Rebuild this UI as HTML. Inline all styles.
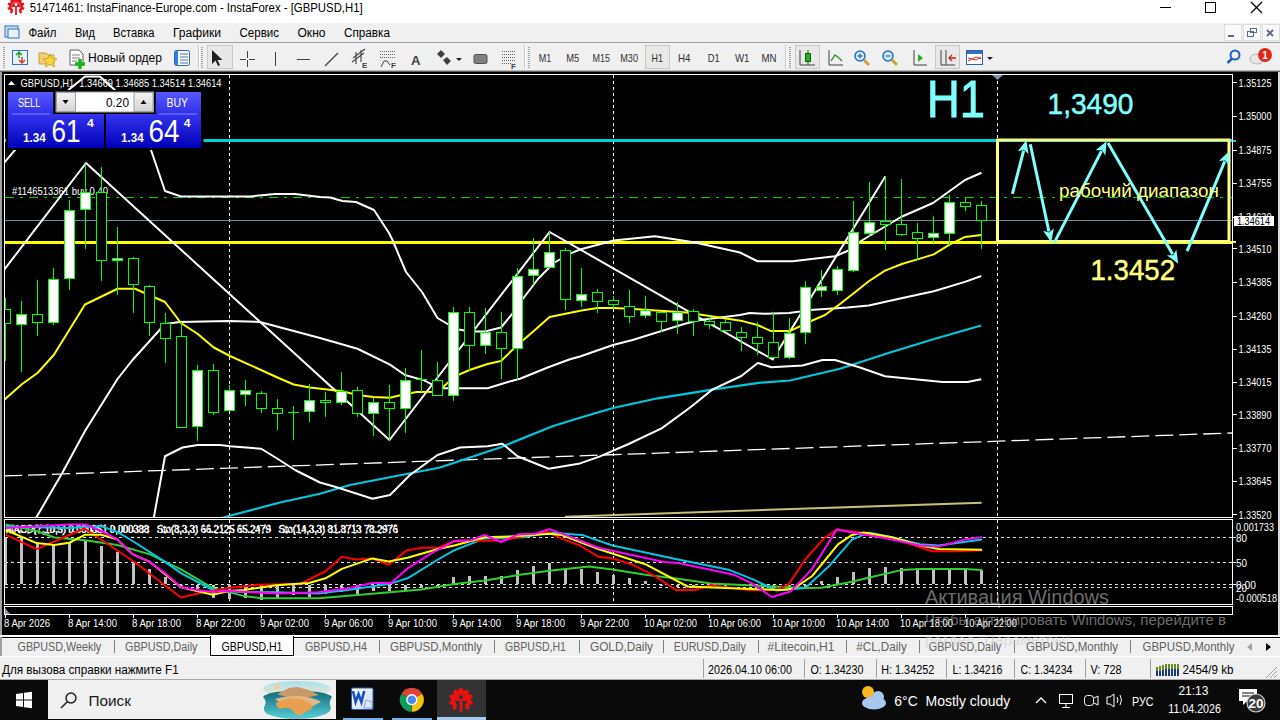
<!DOCTYPE html><html><head><meta charset="utf-8"><style>html,body{margin:0;padding:0;width:1280px;height:720px;overflow:hidden;background:#000}svg text{white-space:pre}</style></head><body>
<svg width="1280" height="720" viewBox="0 0 1280 720" style="position:absolute;left:0;top:0" font-family='"Liberation Sans", sans-serif'>
<rect x="0" y="0" width="1280" height="23" fill="#fff"/>
<rect x="0" y="23" width="1280" height="20" fill="#f0f0f0"/>
<rect x="0" y="42" width="1280" height="1" fill="#a0a0a0"/>
<rect x="0" y="43" width="1280" height="27" fill="#f0f0f0"/>
<g fill="#e8141e"><rect x="-1.17" y="-8.549999999999999" width="2.34" height="2.6999999999999997" transform="translate(16,6.5) rotate(-140)"/><rect x="-1.17" y="-8.549999999999999" width="2.34" height="2.6999999999999997" transform="translate(16,6.5) rotate(-105)"/><rect x="-1.17" y="-8.549999999999999" width="2.34" height="2.6999999999999997" transform="translate(16,6.5) rotate(-70)"/><rect x="-1.17" y="-8.549999999999999" width="2.34" height="2.6999999999999997" transform="translate(16,6.5) rotate(-35)"/><rect x="-1.17" y="-8.549999999999999" width="2.34" height="2.6999999999999997" transform="translate(16,6.5) rotate(0)"/><rect x="-1.17" y="-8.549999999999999" width="2.34" height="2.6999999999999997" transform="translate(16,6.5) rotate(35)"/><rect x="-1.17" y="-8.549999999999999" width="2.34" height="2.6999999999999997" transform="translate(16,6.5) rotate(70)"/><rect x="-1.17" y="-8.549999999999999" width="2.34" height="2.6999999999999997" transform="translate(16,6.5) rotate(105)"/><rect x="-1.17" y="-8.549999999999999" width="2.34" height="2.6999999999999997" transform="translate(16,6.5) rotate(140)"/><path d="M12.696199726617976,11.218315775104593 A5.76,5.76 0 1 1 19.303800273382024,11.218315775104593" fill="none" stroke="#e8141e" stroke-width="2.6999999999999997"/><path d="M11.32,6.95 A4.68,4.68 0 0 1 20.68,6.95 Z"/><rect x="15.1" y="6.5" width="1.8" height="8.549999999999999"/><circle cx="16" cy="4.52" r="1.44" fill="#fff"/></g>
<text x="29.7" y="12.2" font-size="12" fill="#000" text-anchor="start" font-weight="normal" textLength="333" lengthAdjust="spacingAndGlyphs" >51471461: InstaFinance-Europe.com - InstaForex - [GBPUSD,H1]</text>
<g stroke="#000" stroke-width="1" fill="none" shape-rendering="crispEdges"><line x1="1160" y1="7.5" x2="1171" y2="7.5"/><rect x="1205.5" y="2.5" width="10" height="10"/></g>
<g stroke="#000" stroke-width="1.2" fill="none"><line x1="1251" y1="2" x2="1262" y2="13"/><line x1="1262" y1="2" x2="1251" y2="13"/></g>
<g><rect x="5" y="26" width="13" height="11" fill="#cfe0f4" stroke="#3070c0" stroke-width="1"/><rect x="8" y="29" width="11" height="9" fill="#e8f0fa" stroke="#3070c0" stroke-width="1"/></g>
<text x="28.4" y="37" font-size="12" fill="#000" text-anchor="start" font-weight="normal" textLength="28" lengthAdjust="spacingAndGlyphs" >Файл</text>
<text x="75" y="37" font-size="12" fill="#000" text-anchor="start" font-weight="normal" textLength="20" lengthAdjust="spacingAndGlyphs" >Вид</text>
<text x="113" y="37" font-size="12" fill="#000" text-anchor="start" font-weight="normal" textLength="41.5" lengthAdjust="spacingAndGlyphs" >Вставка</text>
<text x="173" y="37" font-size="12" fill="#000" text-anchor="start" font-weight="normal" textLength="48" lengthAdjust="spacingAndGlyphs" >Графики</text>
<text x="239.5" y="37" font-size="12" fill="#000" text-anchor="start" font-weight="normal" textLength="39.5" lengthAdjust="spacingAndGlyphs" >Сервис</text>
<text x="297.5" y="37" font-size="12" fill="#000" text-anchor="start" font-weight="normal" textLength="28" lengthAdjust="spacingAndGlyphs" >Окно</text>
<text x="344" y="37" font-size="12" fill="#000" text-anchor="start" font-weight="normal" textLength="46" lengthAdjust="spacingAndGlyphs" >Справка</text>
<g shape-rendering="crispEdges">
<rect x="1224.0" y="24.5" width="17" height="16" fill="#fafafa" stroke="#dcdcdc"/>
<rect x="1243.0" y="24.5" width="17" height="16" fill="#fafafa" stroke="#dcdcdc"/>
<rect x="1262.0" y="24.5" width="17" height="16" fill="#fafafa" stroke="#dcdcdc"/>
<rect x="1228" y="35" width="6" height="2" fill="#5a6a80"/>
<rect x="1247.5" y="31.5" width="6" height="5" fill="none" stroke="#5a6a80"/><rect x="1250.5" y="28.5" width="6" height="4" fill="none" stroke="#5a6a80"/>
</g>
<g stroke="#5a6a80" stroke-width="1.8"><line x1="1267" y1="30" x2="1273" y2="36"/><line x1="1273" y1="30" x2="1267" y2="36"/></g>
<g shape-rendering="crispEdges">
<rect x="3" y="47" width="2" height="1" fill="#a0a0a0"/>
<rect x="3" y="49" width="2" height="1" fill="#a0a0a0"/>
<rect x="3" y="51" width="2" height="1" fill="#a0a0a0"/>
<rect x="3" y="53" width="2" height="1" fill="#a0a0a0"/>
<rect x="3" y="55" width="2" height="1" fill="#a0a0a0"/>
<rect x="3" y="57" width="2" height="1" fill="#a0a0a0"/>
<rect x="3" y="59" width="2" height="1" fill="#a0a0a0"/>
<rect x="3" y="61" width="2" height="1" fill="#a0a0a0"/>
<rect x="3" y="63" width="2" height="1" fill="#a0a0a0"/>
<rect x="3" y="65" width="2" height="1" fill="#a0a0a0"/>
<rect x="3" y="67" width="2" height="1" fill="#a0a0a0"/>
<rect x="201" y="47" width="2" height="1" fill="#a0a0a0"/>
<rect x="201" y="49" width="2" height="1" fill="#a0a0a0"/>
<rect x="201" y="51" width="2" height="1" fill="#a0a0a0"/>
<rect x="201" y="53" width="2" height="1" fill="#a0a0a0"/>
<rect x="201" y="55" width="2" height="1" fill="#a0a0a0"/>
<rect x="201" y="57" width="2" height="1" fill="#a0a0a0"/>
<rect x="201" y="59" width="2" height="1" fill="#a0a0a0"/>
<rect x="201" y="61" width="2" height="1" fill="#a0a0a0"/>
<rect x="201" y="63" width="2" height="1" fill="#a0a0a0"/>
<rect x="201" y="65" width="2" height="1" fill="#a0a0a0"/>
<rect x="201" y="67" width="2" height="1" fill="#a0a0a0"/>
<rect x="527.5" y="47" width="2" height="1" fill="#a0a0a0"/>
<rect x="527.5" y="49" width="2" height="1" fill="#a0a0a0"/>
<rect x="527.5" y="51" width="2" height="1" fill="#a0a0a0"/>
<rect x="527.5" y="53" width="2" height="1" fill="#a0a0a0"/>
<rect x="527.5" y="55" width="2" height="1" fill="#a0a0a0"/>
<rect x="527.5" y="57" width="2" height="1" fill="#a0a0a0"/>
<rect x="527.5" y="59" width="2" height="1" fill="#a0a0a0"/>
<rect x="527.5" y="61" width="2" height="1" fill="#a0a0a0"/>
<rect x="527.5" y="63" width="2" height="1" fill="#a0a0a0"/>
<rect x="527.5" y="65" width="2" height="1" fill="#a0a0a0"/>
<rect x="527.5" y="67" width="2" height="1" fill="#a0a0a0"/>
<rect x="789" y="47" width="2" height="1" fill="#a0a0a0"/>
<rect x="789" y="49" width="2" height="1" fill="#a0a0a0"/>
<rect x="789" y="51" width="2" height="1" fill="#a0a0a0"/>
<rect x="789" y="53" width="2" height="1" fill="#a0a0a0"/>
<rect x="789" y="55" width="2" height="1" fill="#a0a0a0"/>
<rect x="789" y="57" width="2" height="1" fill="#a0a0a0"/>
<rect x="789" y="59" width="2" height="1" fill="#a0a0a0"/>
<rect x="789" y="61" width="2" height="1" fill="#a0a0a0"/>
<rect x="789" y="63" width="2" height="1" fill="#a0a0a0"/>
<rect x="789" y="65" width="2" height="1" fill="#a0a0a0"/>
<rect x="789" y="67" width="2" height="1" fill="#a0a0a0"/>
<rect x="197.5" y="45" width="1" height="24" fill="#c8c8c8"/><rect x="198.5" y="45" width="1" height="24" fill="#ffffff"/>
<rect x="523.5" y="45" width="1" height="24" fill="#c8c8c8"/><rect x="524.5" y="45" width="1" height="24" fill="#ffffff"/>
<rect x="785" y="45" width="1" height="24" fill="#c8c8c8"/><rect x="786" y="45" width="1" height="24" fill="#ffffff"/>
<rect x="207.5" y="45.5" width="24.5" height="23" fill="#e8e8e8" stroke="#c8c8c8"/>
<rect x="645.5" y="45.5" width="24.0" height="23" fill="#e8e8e8" stroke="#c8c8c8"/>
<rect x="795.5" y="45.5" width="23.5" height="23" fill="#e8e8e8" stroke="#c8c8c8"/>
<rect x="935" y="45.5" width="24" height="23" fill="#e8e8e8" stroke="#c8c8c8"/>
</g>
<rect x="12.5" y="50.5" width="15" height="14" fill="#e8f0fa" stroke="#3070c0"/><path d="M16 55 l3-3 l3 3 M19 53 v5" stroke="#20a020" stroke-width="1.5" fill="none"/><path d="M19 60 l3 3 l3-3 M22 62 v-5" stroke="#e04020" stroke-width="1.5" fill="none"/>
<path d="M39 53 h7 l2 2 h6 v9 h-15 z" fill="#f0d070" stroke="#c0a040"/><path d="M50 54 l2 4.5 5 .5 -3.7 3 1.2 5 -4.5-2.7 -4.5 2.7 1.2-5 -3.7-3 5-.5z" fill="#f8d838" stroke="#c09020" stroke-width=".8"/>
<path d="M70 50 h9 l4 4 v11 h-13 z" fill="#fff" stroke="#606060"/><path d="M72 55 h8 M72 58 h8 M72 61 h5" stroke="#808080"/><path d="M80 59 v10 M75 64 h10" stroke="#20b020" stroke-width="3.5"/>
<text x="88" y="61.5" font-size="12" fill="#000" text-anchor="start" font-weight="normal" textLength="74" lengthAdjust="spacingAndGlyphs" >Новый ордер</text>
<rect x="174.5" y="50.5" width="15" height="15" rx="2" fill="#fff" stroke="#3060b0"/><rect x="175" y="51" width="3" height="14" fill="#3080e0"/><path d="M180 54 h8 M180 57 h8 M180 60 h8 M180 63 h8" stroke="#4070b0"/>
<path d="M212 50 v14 l3.5-3.5 l2.5 5.5 l2-1 l-2.5-5 h5 z" fill="#202020"/>
<path d="M247.5 51 v7 M247.5 60 v7 M240 59.5 h6 M249 59.5 h6" stroke="#404040"/>
<path d="M275.5 52 v14" stroke="#404040"/>
<path d="M297 59.5 h13" stroke="#404040"/>
<path d="M325 66 l13-13" stroke="#404040" stroke-width="1.2"/>
<path d="M352 62 l12-9 M353 58 l12-9 M356 52 v12 M361 50 v12" stroke="#404040" stroke-width="1.1"/>
<text x="362" y="68" font-size="8" fill="#404040" text-anchor="start" font-weight="bold" >E</text>
<path d="M380 51.5 h15 M380 54.5 h15 M380 57.5 h15" stroke="#606060" stroke-dasharray="1 1"/><path d="M381 67 l3-6 h3 l3 4" stroke="#404040" fill="none"/>
<text x="391" y="68" font-size="8" fill="#404040" text-anchor="start" font-weight="bold" >F</text>
<text x="411" y="65" font-size="13" fill="#404040" text-anchor="start" font-weight="bold" textLength="9.5" lengthAdjust="spacingAndGlyphs" >A</text>
<path d="M437 54 l4-4 l4 4 l-4 4z M443 60 l4-3 l4 4 l-4 4z" fill="#404040"/><path d="M456 58 h6 l-3 3z" fill="#202020"/>
<rect x="474" y="54.5" width="13" height="9" rx="1.5" fill="#808080" stroke="#505050"/>
<path d="M502 51.5 h14 M502 54.5 h14 M502 57.5 h14 M502 60.5 h14 M502 63.5 h10" stroke="#606060" stroke-dasharray="1 1"/>
<text x="511" y="69" font-size="8" fill="#404040" text-anchor="start" font-weight="bold" >F</text>
<text x="538.75" y="62" font-size="11" fill="#303030" text-anchor="start" font-weight="normal" textLength="12.5" lengthAdjust="spacingAndGlyphs" >M1</text>
<text x="566.25" y="62" font-size="11" fill="#303030" text-anchor="start" font-weight="normal" textLength="13" lengthAdjust="spacingAndGlyphs" >M5</text>
<text x="592.5" y="62" font-size="11" fill="#303030" text-anchor="start" font-weight="normal" textLength="17.5" lengthAdjust="spacingAndGlyphs" >M15</text>
<text x="620.3" y="62" font-size="11" fill="#303030" text-anchor="start" font-weight="normal" textLength="17.7" lengthAdjust="spacingAndGlyphs" >M30</text>
<text x="651.5" y="62" font-size="11" fill="#303030" text-anchor="start" font-weight="normal" textLength="11.5" lengthAdjust="spacingAndGlyphs" >H1</text>
<text x="678" y="62" font-size="11" fill="#303030" text-anchor="start" font-weight="normal" textLength="12.5" lengthAdjust="spacingAndGlyphs" >H4</text>
<text x="707.8" y="62" font-size="11" fill="#303030" text-anchor="start" font-weight="normal" textLength="12" lengthAdjust="spacingAndGlyphs" >D1</text>
<text x="735" y="62" font-size="11" fill="#303030" text-anchor="start" font-weight="normal" textLength="14.5" lengthAdjust="spacingAndGlyphs" >W1</text>
<text x="761.5" y="62" font-size="11" fill="#303030" text-anchor="start" font-weight="normal" textLength="15" lengthAdjust="spacingAndGlyphs" >MN</text>
<path d="M800 50 v15 h15" stroke="#404040" fill="none"/><rect x="805.5" y="53.5" width="5" height="8" fill="#20b020" stroke="#106010"/><path d="M808 50 v3 M808 62 v3" stroke="#106010"/>
<path d="M829 50 v15 h14" stroke="#404040" fill="none"/><path d="M831 61 l4-6 l4 3 l3 3" stroke="#209020" fill="none" stroke-width="1.3"/>
<circle cx="860" cy="56" r="5" fill="#d8ecff" stroke="#2070c0" stroke-width="1.5"/><path d="M857.5 56 h5 M860 53.5 v5" stroke="#2070c0" stroke-width="1.3"/><path d="M864 60 l5 5" stroke="#d0a030" stroke-width="3"/>
<circle cx="888" cy="56" r="5" fill="#d8ecff" stroke="#2070c0" stroke-width="1.5"/><path d="M885.5 56 h5" stroke="#2070c0" stroke-width="1.3"/><path d="M892 60 l5 5" stroke="#d0a030" stroke-width="3"/>
<path d="M914 50 v15 h13" stroke="#404040" fill="none"/><path d="M918 54 l5 4 l-5 4z" fill="#20b020"/>
<path d="M941 50 v15 h14 M946 50 v15" stroke="#404040" fill="none"/><path d="M956 58 h-6 M952 55 l-3 3 l3 3" stroke="#d02020" fill="none" stroke-width="1.3"/>
<rect x="966.5" y="50.5" width="16" height="14" fill="#fff" stroke="#3060a0"/><rect x="967" y="51" width="15" height="3" fill="#3070c0"/><path d="M968 61 l4-2 l4 1 l5-3 M968 58 l4 1 l4-2 l5 2" stroke="#d03030" fill="none"/><path d="M987 57 h6 l-3 3z" fill="#202020"/>
<circle cx="1235" cy="55" r="4.5" fill="none" stroke="#2060c0" stroke-width="2"/><path d="M1232 58.5 l-4.5 4.5" stroke="#2060c0" stroke-width="2.5"/>
<ellipse cx="1257" cy="59" rx="7" ry="5" fill="#e8e8e8" stroke="#b0b0b0"/><circle cx="1265" cy="55" r="7" fill="#e02818"/>
<text x="1265" y="59" font-size="10" fill="#fff" text-anchor="middle" font-weight="bold" >1</text>
<rect x="2" y="72" width="1276" height="563" fill="#000"/>
<rect x="0" y="70" width="1280" height="1" fill="#b8b8b8"/><rect x="0" y="71" width="1280" height="1" fill="#606060"/>
<rect x="0" y="72" width="2" height="565" fill="#a0a0a0"/>
<rect x="1278" y="72" width="2" height="565" fill="#d8d8d8"/>
<g shape-rendering="crispEdges">
<rect x="4.5" y="74.5" width="1228" height="443" fill="none" stroke="#fff" stroke-width="1"/>
<rect x="4.5" y="519.5" width="1228" height="85" fill="none" stroke="#fff" stroke-width="1"/>
<rect x="4.5" y="606.5" width="1228" height="8" fill="none" stroke="#fff" stroke-width="1"/>
</g>
<defs><clipPath id="cm"><rect x="5" y="75" width="1227" height="442"/></clipPath><clipPath id="ci"><rect x="5" y="520" width="1227" height="84"/></clipPath></defs>
<g clip-path="url(#cm)">
<g shape-rendering="crispEdges" stroke="#fff" stroke-width="1" stroke-dasharray="3 3">
<line x1="229.5" y1="75" x2="229.5" y2="517"/>
<line x1="613.5" y1="75" x2="613.5" y2="517"/>
<line x1="997.5" y1="75" x2="997.5" y2="517"/>
</g>
<g shape-rendering="crispEdges">
<rect x="5" y="139" width="1227" height="3" fill="#00d0d8"/>
<line x1="5" y1="197.5" x2="1232" y2="197.5" stroke="#00d000" stroke-width="1" stroke-dasharray="9 6 3 6"/>
<line x1="5" y1="220.5" x2="1232" y2="220.5" stroke="#778899" stroke-width="1"/>
<rect x="5" y="241" width="1227" height="3" fill="#ffff00"/>
</g>
<text x="20.5" y="87" font-size="10.5" fill="#fff" text-anchor="start" font-weight="normal" textLength="201" lengthAdjust="spacingAndGlyphs" >GBPUSD,H1  1.34669 1.34685 1.34514 1.34614</text>
<polygon points="8,85 11.5,81 15,85" fill="#fff"/>
<text x="12" y="194.5" font-size="10" fill="#fff" text-anchor="start" font-weight="normal" textLength="96" lengthAdjust="spacingAndGlyphs" >#1146513361 buy 0.40</text>
<line x1="4" y1="476" x2="1232" y2="433" stroke="#fff" stroke-width="1.3" stroke-dasharray="18 6"/>
<polyline points="565,516.7 981.7,502.7" fill="none" stroke="#c8c078" stroke-width="2" stroke-linejoin="round" />
<polyline points="221.25,518 280,502.5 320,493.75 350,485 440,467.5 500,447.5 552.5,426.25 580,417.7 613,408 657.7,398.3 712.2,389.6 758.8,382.8 790,380.5 840,368.75 890,352.5 935,338.75 981.25,325.5" fill="none" stroke="#00c8dc" stroke-width="2.2" stroke-linejoin="round" />
<polyline points="153.75,518 165,456.25 182.5,447.5 197.5,445 220,445 230,446.25 261.25,448.75 277.5,458.75 295,470 320,482.5 337.5,487.5 372.5,498.75 390,495 410,475 437.5,455 460,447.5 487.5,446.25 502.5,443.75 517.5,456.25 548.75,468.75 580,463.4 599.4,456.6 628.6,444 661.6,428.4 690.8,407 712.2,389.6 741.3,376 757.8,363 771.4,367.2 802.5,365.5 822.5,360 835,360 860,367.5 885,376.25 910,378.75 942.5,382 967.5,382 981.25,379.25" fill="none" stroke="#fff" stroke-width="2" stroke-linejoin="round" />
<polyline points="36,518 62.5,472.5 85,431 117.5,379 132.5,360 165,324 180,322 229,321 260,322 320,338 357.5,348.75 390,364.6 405,375 424,380.4 440,388.3 487.6,388.3 508.7,381.7 520,378.75 548.3,367.2 570,359.3 580,356.5 613,345 632.5,340 685,323.75 700,320 740,315 749.5,313 765,313.75 789,313 800,311.6 810,310 847.5,307.5 868.75,305.6 902.5,298.1 933.75,291.25 965,281.9 981.25,276" fill="none" stroke="#fff" stroke-width="2" stroke-linejoin="round" />
<polyline points="4,163 15,150 69,89.6 85,76.5 100,76.5 114.8,90 151,150 165,191 181,196.5 230,196.5 250,196.5 275,194 295,194 320,197 330,197.5 342.5,201 356,202 374,210 389,233 392.5,240 406,272 422,292 437.5,318 456,329 470,331.5 485,331.5 501,327.5 517.5,307.5 522,300 538,279 553.6,263 570,253.7 580,249.5 613.75,240.5 655,236.25 695,242.5 740,252.5 757.5,261.25 792.5,261.25 835,256.25 847.5,251 856,244 901,217 933,203 965,180 981.5,172.75" fill="none" stroke="#fff" stroke-width="2" stroke-linejoin="round" />
<polyline points="4,270 86,163 389.5,440 549.6,232 772.7,359.5 885.3,176.5" fill="none" stroke="#fff" stroke-width="2" stroke-linejoin="round" />
<polyline points="4,400 22.5,383.75 37.5,373 53.75,355 85,304.5 117.5,288.75 135,288.75 165,302 181,323 197.5,333.75 213.75,347.5 230,356 261,370 277.5,377.5 293.75,384.5 310,387.5 342.5,391.25 357.5,395 373.5,397 390,397.8 405.5,394 416.7,392 437.8,391.7 442,388 454.4,376.7 469.5,370 487.6,364 501,361 517.5,345 533.5,331.25 549.6,317 565.5,313.75 581.5,310.5 597.5,308 613.5,308 630,308.8 652.5,310.2 686.25,312.6 714.4,316.8 742.5,321.1 757.5,325 770.6,330.9 790.3,330.9 810,321.5 825,315 840,304 856.25,291.25 868.75,281.25 885,270.6 902.5,263.75 917.5,259.4 933.75,254.4 950,244.4 965,236.9 981.25,235" fill="none" stroke="#ffff00" stroke-width="2" stroke-linejoin="round" />
<g shape-rendering="crispEdges" stroke="#00ff00" stroke-width="1">
<line x1="5.5" y1="298" x2="5.5" y2="361"/>
<rect x="0.5" y="309.5" width="10" height="14" fill="#000000"/>
<line x1="21.5" y1="301" x2="21.5" y2="372"/>
<rect x="16.5" y="314.5" width="10" height="10" fill="#ffffff"/>
<line x1="37.5" y1="280" x2="37.5" y2="336"/>
<rect x="32.5" y="314.5" width="10" height="8" fill="#000000"/>
<line x1="53.5" y1="268" x2="53.5" y2="325"/>
<rect x="48.5" y="279.5" width="10" height="43" fill="#ffffff"/>
<line x1="69.5" y1="200" x2="69.5" y2="290"/>
<rect x="64.5" y="210.5" width="10" height="68" fill="#ffffff"/>
<line x1="85.5" y1="164" x2="85.5" y2="249"/>
<rect x="80.5" y="192.5" width="10" height="17" fill="#ffffff"/>
<line x1="101.5" y1="167" x2="101.5" y2="281"/>
<rect x="96.5" y="192.5" width="10" height="68" fill="#000000"/>
<line x1="117.5" y1="227" x2="117.5" y2="295"/>
<rect x="112.5" y="258.5" width="10" height="2" fill="#ffffff"/>
<line x1="133.5" y1="257" x2="133.5" y2="313"/>
<rect x="128.5" y="258.5" width="10" height="26" fill="#000000"/>
<line x1="149.5" y1="285" x2="149.5" y2="336"/>
<rect x="144.5" y="286.5" width="10" height="36" fill="#000000"/>
<line x1="165.5" y1="313" x2="165.5" y2="363"/>
<rect x="160.5" y="323.5" width="10" height="15" fill="#000000"/>
<line x1="181.5" y1="322" x2="181.5" y2="428"/>
<rect x="176.5" y="336.5" width="10" height="91" fill="#000000"/>
<line x1="197.5" y1="365" x2="197.5" y2="441"/>
<rect x="192.5" y="370.5" width="10" height="56" fill="#ffffff"/>
<line x1="213.5" y1="364" x2="213.5" y2="415"/>
<rect x="208.5" y="370.5" width="10" height="42" fill="#000000"/>
<line x1="229.5" y1="385" x2="229.5" y2="411"/>
<rect x="224.5" y="390.5" width="10" height="20" fill="#ffffff"/>
<line x1="245.5" y1="380" x2="245.5" y2="406"/>
<rect x="240.5" y="390.5" width="10" height="4" fill="#ffffff"/>
<line x1="261.5" y1="391" x2="261.5" y2="413"/>
<rect x="256.5" y="393.5" width="10" height="15" fill="#000000"/>
<line x1="277.5" y1="399" x2="277.5" y2="430"/>
<rect x="272.5" y="408.5" width="10" height="5" fill="#000000"/>
<line x1="293.5" y1="406" x2="293.5" y2="440"/>
<line x1="288" y1="412.5" x2="299" y2="412.5"/>
<line x1="309.5" y1="384" x2="309.5" y2="422"/>
<rect x="304.5" y="400.5" width="10" height="11" fill="#ffffff"/>
<line x1="325.5" y1="392" x2="325.5" y2="417"/>
<rect x="320.5" y="400.5" width="10" height="2" fill="#000000"/>
<line x1="341.5" y1="372" x2="341.5" y2="405"/>
<rect x="336.5" y="391.5" width="10" height="11" fill="#ffffff"/>
<line x1="357.5" y1="387" x2="357.5" y2="417"/>
<rect x="352.5" y="390.5" width="10" height="23" fill="#000000"/>
<line x1="373.5" y1="398" x2="373.5" y2="436"/>
<rect x="368.5" y="402.5" width="10" height="11" fill="#ffffff"/>
<line x1="389.5" y1="385" x2="389.5" y2="441"/>
<rect x="384.5" y="402.5" width="10" height="6" fill="#000000"/>
<line x1="405.5" y1="368" x2="405.5" y2="433"/>
<rect x="400.5" y="380.5" width="10" height="28" fill="#ffffff"/>
<line x1="421.5" y1="350" x2="421.5" y2="392"/>
<line x1="416" y1="379.5" x2="427" y2="379.5"/>
<line x1="437.5" y1="362" x2="437.5" y2="396"/>
<rect x="432.5" y="380.5" width="10" height="15" fill="#000000"/>
<line x1="453.5" y1="307" x2="453.5" y2="401"/>
<rect x="448.5" y="312.5" width="10" height="83" fill="#ffffff"/>
<line x1="469.5" y1="307" x2="469.5" y2="371"/>
<rect x="464.5" y="312.5" width="10" height="33" fill="#000000"/>
<line x1="485.5" y1="308" x2="485.5" y2="354"/>
<rect x="480.5" y="332.5" width="10" height="13" fill="#ffffff"/>
<line x1="501.5" y1="312" x2="501.5" y2="379"/>
<rect x="496.5" y="332.5" width="10" height="16" fill="#000000"/>
<line x1="517.5" y1="268" x2="517.5" y2="380"/>
<rect x="512.5" y="276.5" width="10" height="72" fill="#ffffff"/>
<line x1="533.5" y1="238" x2="533.5" y2="285"/>
<rect x="528.5" y="269.5" width="10" height="6" fill="#ffffff"/>
<line x1="549.5" y1="232" x2="549.5" y2="268"/>
<rect x="544.5" y="252.5" width="10" height="15" fill="#ffffff"/>
<line x1="565.5" y1="248" x2="565.5" y2="310"/>
<rect x="560.5" y="250.5" width="10" height="49" fill="#000000"/>
<line x1="581.5" y1="268" x2="581.5" y2="307"/>
<rect x="576.5" y="294.5" width="10" height="6" fill="#ffffff"/>
<line x1="597.5" y1="289" x2="597.5" y2="313"/>
<rect x="592.5" y="292.5" width="10" height="9" fill="#000000"/>
<line x1="613.5" y1="296" x2="613.5" y2="309"/>
<rect x="608.5" y="300.5" width="10" height="4" fill="#000000"/>
<line x1="629.5" y1="290" x2="629.5" y2="323"/>
<rect x="624.5" y="306.5" width="10" height="10" fill="#000000"/>
<line x1="645.5" y1="296" x2="645.5" y2="318"/>
<rect x="640.5" y="310.5" width="10" height="5" fill="#ffffff"/>
<line x1="661.5" y1="312" x2="661.5" y2="332"/>
<rect x="656.5" y="312.5" width="10" height="9" fill="#000000"/>
<line x1="677.5" y1="302" x2="677.5" y2="334"/>
<rect x="672.5" y="312.5" width="10" height="8" fill="#ffffff"/>
<line x1="693.5" y1="309" x2="693.5" y2="336"/>
<rect x="688.5" y="311.5" width="10" height="10" fill="#000000"/>
<line x1="709.5" y1="316" x2="709.5" y2="329"/>
<rect x="704.5" y="321.5" width="10" height="3" fill="#000000"/>
<line x1="725.5" y1="319" x2="725.5" y2="332"/>
<rect x="720.5" y="322.5" width="10" height="8" fill="#000000"/>
<line x1="741.5" y1="327" x2="741.5" y2="351"/>
<rect x="736.5" y="332.5" width="10" height="5" fill="#000000"/>
<line x1="757.5" y1="322" x2="757.5" y2="355"/>
<rect x="752.5" y="337.5" width="10" height="6" fill="#000000"/>
<line x1="773.5" y1="312" x2="773.5" y2="358"/>
<rect x="768.5" y="342.5" width="10" height="15" fill="#000000"/>
<line x1="789.5" y1="318" x2="789.5" y2="359"/>
<rect x="784.5" y="333.5" width="10" height="24" fill="#ffffff"/>
<line x1="805.5" y1="281" x2="805.5" y2="344"/>
<rect x="800.5" y="287.5" width="10" height="45" fill="#ffffff"/>
<line x1="821.5" y1="270" x2="821.5" y2="297"/>
<rect x="816.5" y="286.5" width="10" height="4" fill="#ffffff"/>
<line x1="837.5" y1="266" x2="837.5" y2="295"/>
<rect x="832.5" y="269.5" width="10" height="21" fill="#ffffff"/>
<line x1="853.5" y1="201" x2="853.5" y2="272"/>
<rect x="848.5" y="232.5" width="10" height="38" fill="#ffffff"/>
<line x1="869.5" y1="182" x2="869.5" y2="237"/>
<rect x="864.5" y="222.5" width="10" height="11" fill="#ffffff"/>
<line x1="885.5" y1="176" x2="885.5" y2="250"/>
<rect x="880.5" y="221.5" width="10" height="3" fill="#000000"/>
<line x1="901.5" y1="179" x2="901.5" y2="236"/>
<rect x="896.5" y="224.5" width="10" height="10" fill="#000000"/>
<line x1="917.5" y1="223" x2="917.5" y2="260"/>
<rect x="912.5" y="232.5" width="10" height="6" fill="#000000"/>
<line x1="933.5" y1="216" x2="933.5" y2="243"/>
<rect x="928.5" y="233.5" width="10" height="4" fill="#ffffff"/>
<line x1="949.5" y1="195" x2="949.5" y2="245"/>
<rect x="944.5" y="202.5" width="10" height="31" fill="#ffffff"/>
<line x1="965.5" y1="197" x2="965.5" y2="211"/>
<rect x="960.5" y="202.5" width="10" height="4" fill="#000000"/>
<line x1="981.5" y1="201" x2="981.5" y2="249"/>
<rect x="976.5" y="205.5" width="10" height="15" fill="#000000"/>
</g>
<rect x="997.5" y="140" width="231.5" height="101.5" fill="none" stroke="#ffff80" stroke-width="3"/>
<line x1="1012.4" y1="193.9" x2="1023.6298035863915" y2="150.7454690751526" stroke="#80ffff" stroke-width="3"/>
<polygon points="1026.4,140.1 1028.4488660487664,154.0661071138028 1023.8816396239923,149.77769915922963 1017.8033969736138,151.29591070019427" fill="#80ffff"/>
<line x1="1030.3" y1="144.3" x2="1048.9056767998431" y2="231.54192949208726" stroke="#80ffff" stroke-width="3"/>
<polygon points="1051.2,242.3 1043.109491873131,230.7330782725452 1049.114251636221,232.51993590189753 1053.8675623810436,228.43875507238832" fill="#80ffff"/>
<line x1="1054.2" y1="242.9" x2="1101.4654745995701" y2="151.08026349299578" stroke="#80ffff" stroke-width="3"/>
<polygon points="1106.5,141.3 1105.4402380914444,155.37575591920998 1101.9231587268819,150.19114862999618 1095.6599745984486,150.34123051878007" fill="#80ffff"/>
<line x1="1108" y1="143.1" x2="1172.6696688631075" y2="254.29129674896114" stroke="#80ffff" stroke-width="3"/>
<polygon points="1178.2,263.8 1166.9098024854259,255.3276071808549 1173.1724262391886,255.1557243172374 1176.4185057364646,249.79727604396237" fill="#80ffff"/>
<line x1="1187.1" y1="251.2" x2="1224.7490683379735" y2="161.34542162774818" stroke="#80ffff" stroke-width="3"/>
<polygon points="1229,151.2 1229.0488824860245,165.31550957289747 1225.135516670885,160.42311057068017 1218.9034608582765,161.06457791087095" fill="#80ffff"/>
</g>
<text x="927" y="117.3" font-size="51" fill="#80ffff" text-anchor="start" font-weight="normal" textLength="58" lengthAdjust="spacingAndGlyphs" stroke="#80ffff" stroke-width="0.9">H1</text>
<text x="1047.5" y="114" font-size="30" fill="#80ffff" text-anchor="start" font-weight="normal" textLength="86" lengthAdjust="spacingAndGlyphs" stroke="#80ffff" stroke-width="0.5">1,3490</text>
<text x="1059" y="197" font-size="18.5" fill="#ffff80" text-anchor="start" font-weight="normal" textLength="160" lengthAdjust="spacingAndGlyphs" >рабочий диапазон</text>
<text x="1090.5" y="279.6" font-size="30" fill="#ffff80" text-anchor="start" font-weight="normal" textLength="84.5" lengthAdjust="spacingAndGlyphs" stroke="#ffff80" stroke-width="0.5">1.3452</text>
<polygon points="992,75 1003,75 997.5,80" fill="#8090a8"/>
<g shape-rendering="crispEdges" stroke="#fff" stroke-width="1">
<line x1="1233" y1="82.5" x2="1237" y2="82.5"/>
<line x1="1233" y1="116.5" x2="1237" y2="116.5"/>
<line x1="1233" y1="150.5" x2="1237" y2="150.5"/>
<line x1="1233" y1="183.5" x2="1237" y2="183.5"/>
<line x1="1233" y1="217.5" x2="1237" y2="217.5"/>
<line x1="1233" y1="248.5" x2="1237" y2="248.5"/>
<line x1="1233" y1="282.5" x2="1237" y2="282.5"/>
<line x1="1233" y1="316.5" x2="1237" y2="316.5"/>
<line x1="1233" y1="349.5" x2="1237" y2="349.5"/>
<line x1="1233" y1="382.5" x2="1237" y2="382.5"/>
<line x1="1233" y1="414.5" x2="1237" y2="414.5"/>
<line x1="1233" y1="448.5" x2="1237" y2="448.5"/>
<line x1="1233" y1="481.5" x2="1237" y2="481.5"/>
<line x1="1233" y1="514.5" x2="1237" y2="514.5"/>
</g>
<text x="1238.5" y="86.5" font-size="11" fill="#fff" text-anchor="start" font-weight="normal" textLength="33" lengthAdjust="spacingAndGlyphs" >1.35125</text>
<text x="1238.5" y="120" font-size="11" fill="#fff" text-anchor="start" font-weight="normal" textLength="33" lengthAdjust="spacingAndGlyphs" >1.35000</text>
<text x="1238.5" y="153.5" font-size="11" fill="#fff" text-anchor="start" font-weight="normal" textLength="33" lengthAdjust="spacingAndGlyphs" >1.34875</text>
<text x="1238.5" y="187" font-size="11" fill="#fff" text-anchor="start" font-weight="normal" textLength="33" lengthAdjust="spacingAndGlyphs" >1.34755</text>
<text x="1238.5" y="252.5" font-size="11" fill="#fff" text-anchor="start" font-weight="normal" textLength="33" lengthAdjust="spacingAndGlyphs" >1.34510</text>
<text x="1238.5" y="286" font-size="11" fill="#fff" text-anchor="start" font-weight="normal" textLength="33" lengthAdjust="spacingAndGlyphs" >1.34385</text>
<text x="1238.5" y="319.5" font-size="11" fill="#fff" text-anchor="start" font-weight="normal" textLength="33" lengthAdjust="spacingAndGlyphs" >1.34260</text>
<text x="1238.5" y="353" font-size="11" fill="#fff" text-anchor="start" font-weight="normal" textLength="33" lengthAdjust="spacingAndGlyphs" >1.34135</text>
<text x="1238.5" y="385.5" font-size="11" fill="#fff" text-anchor="start" font-weight="normal" textLength="33" lengthAdjust="spacingAndGlyphs" >1.34015</text>
<text x="1238.5" y="418.5" font-size="11" fill="#fff" text-anchor="start" font-weight="normal" textLength="33" lengthAdjust="spacingAndGlyphs" >1.33890</text>
<text x="1238.5" y="451.5" font-size="11" fill="#fff" text-anchor="start" font-weight="normal" textLength="33" lengthAdjust="spacingAndGlyphs" >1.33770</text>
<text x="1238.5" y="485" font-size="11" fill="#fff" text-anchor="start" font-weight="normal" textLength="33" lengthAdjust="spacingAndGlyphs" >1.33645</text>
<text x="1238.5" y="518.5" font-size="11" fill="#fff" text-anchor="start" font-weight="normal" textLength="33" lengthAdjust="spacingAndGlyphs" >1.33520</text>
<text x="1238.5" y="221" font-size="11" fill="#fff" text-anchor="start" font-weight="normal" textLength="33" lengthAdjust="spacingAndGlyphs" >1.34630</text>
<rect x="1234" y="216" width="40" height="10" fill="#fff"/>
<text x="1237" y="225" font-size="11" fill="#000" text-anchor="start" font-weight="normal" textLength="33" lengthAdjust="spacingAndGlyphs" >1.34614</text>
<rect x="1233" y="140" width="3" height="2" fill="#00d0d8"/><rect x="1233" y="241" width="3" height="2" fill="#ffff00"/>
<g clip-path="url(#ci)">
<g shape-rendering="crispEdges" stroke="#fff" stroke-width="1" stroke-dasharray="3 3">
<text x="6" y="532.5" font-size="10" fill="#fff" text-anchor="start" font-weight="normal" textLength="392" lengthAdjust="spacingAndGlyphs" >MACD(7,10,5) 0.000351 0,000388   Sto(8,3,3) 66.2125 65.2479   Sto(14,3,3) 81.8713 78.2976</text>
<line x1="5" y1="537.5" x2="1232" y2="537.5" stroke="#e0e0e0"/>
<line x1="5" y1="562.5" x2="1232" y2="562.5" stroke="#e0e0e0"/>
<line x1="5" y1="584.5" x2="1232" y2="584.5" stroke="#e0e0e0"/>
<line x1="5" y1="587.5" x2="1232" y2="587.5" stroke="#e0e0e0"/>
<line x1="229.5" y1="520" x2="229.5" y2="604"/>
<line x1="613.5" y1="520" x2="613.5" y2="604"/>
<line x1="997.5" y1="520" x2="997.5" y2="604"/>
</g>
<g shape-rendering="crispEdges" fill="#c0c0c0">
<rect x="4" y="537" width="3" height="47"/>
<rect x="20" y="537" width="3" height="47"/>
<rect x="36" y="543" width="3" height="41"/>
<rect x="52" y="545" width="3" height="39"/>
<rect x="68" y="542" width="3" height="42"/>
<rect x="84" y="540" width="3" height="44"/>
<rect x="100" y="546" width="3" height="38"/>
<rect x="116" y="552" width="3" height="32"/>
<rect x="132" y="563" width="3" height="21"/>
<rect x="148" y="569" width="3" height="15"/>
<rect x="164" y="577" width="3" height="7"/>
<rect x="180" y="585" width="3" height="1"/>
<rect x="196" y="585" width="3" height="4"/>
<rect x="212" y="585" width="3" height="13"/>
<rect x="228" y="585" width="3" height="14"/>
<rect x="244" y="585" width="3" height="13"/>
<rect x="260" y="585" width="3" height="15"/>
<rect x="276" y="585" width="3" height="14"/>
<rect x="292" y="585" width="3" height="10"/>
<rect x="308" y="585" width="3" height="12"/>
<rect x="324" y="585" width="3" height="9"/>
<rect x="340" y="585" width="3" height="7"/>
<rect x="356" y="585" width="3" height="9"/>
<rect x="372" y="585" width="3" height="6"/>
<rect x="388" y="585" width="3" height="6"/>
<rect x="404" y="585" width="3" height="5"/>
<rect x="420" y="585" width="3" height="3"/>
<rect x="436" y="585" width="3" height="3"/>
<rect x="452" y="577" width="3" height="7"/>
<rect x="468" y="576" width="3" height="8"/>
<rect x="484" y="576" width="3" height="8"/>
<rect x="500" y="576" width="3" height="8"/>
<rect x="516" y="570" width="3" height="14"/>
<rect x="532" y="566" width="3" height="18"/>
<rect x="548" y="563" width="3" height="21"/>
<rect x="564" y="569" width="3" height="15"/>
<rect x="580" y="569" width="3" height="15"/>
<rect x="596" y="572" width="3" height="12"/>
<rect x="612" y="575" width="3" height="9"/>
<rect x="628" y="578" width="3" height="6"/>
<rect x="644" y="581" width="3" height="3"/>
<rect x="660" y="585" width="3" height="1"/>
<rect x="676" y="585" width="3" height="2"/>
<rect x="692" y="585" width="3" height="3"/>
<rect x="708" y="585" width="3" height="3"/>
<rect x="724" y="585" width="3" height="3"/>
<rect x="740" y="585" width="3" height="1"/>
<rect x="756" y="585" width="3" height="1"/>
<rect x="772" y="585" width="3" height="3"/>
<rect x="788" y="585" width="3" height="4"/>
<rect x="804" y="585" width="3" height="2"/>
<rect x="820" y="581" width="3" height="3"/>
<rect x="836" y="577" width="3" height="7"/>
<rect x="852" y="572" width="3" height="12"/>
<rect x="868" y="568" width="3" height="16"/>
<rect x="884" y="567" width="3" height="17"/>
<rect x="900" y="568" width="3" height="16"/>
<rect x="916" y="568" width="3" height="16"/>
<rect x="932" y="568" width="3" height="16"/>
<rect x="948" y="568" width="3" height="16"/>
<rect x="964" y="568" width="3" height="16"/>
<rect x="980" y="570" width="3" height="14"/>
</g>
<polyline points="5.6,524.4 36.6,531 54.4,537.5 85.3,540.3 117.2,545 150,554.4 181,569.4 212.8,588.1 243.4,595.9 261.5,598.2 318.4,598.2 360.6,594.7 421.5,589.5 454.4,584.1 484.8,580.6 520,574.8 549.2,570.8 589,566.6 612.5,569.4 645.3,574.8 678.1,578.7 710.9,583.4 757.8,585.8 805.2,588.1 821.6,587.7 852,581.8 868.4,577.8 901.2,570.1 920,568.9 964.5,568.9 982.1,570.1" fill="none" stroke="#32cd32" stroke-width="2" stroke-linejoin="round" />
<polyline points="5.6,526.6 69.4,528.1 101.25,526.25 117.2,531.9 133.1,541.25 165,561.9 181,573.1 212.8,590 240,591.9 276.2,592.3 318.4,593.5 351.2,589.5 388.7,584.1 407.5,578.3 438,559.5 454.4,550.2 484.8,538.4 523.4,537.3 549.2,532.6 582,534.9 612.5,545.5 678.1,559.5 729.7,570.1 753.1,579.4 776.5,590.5 805.2,588.1 828.6,566.6 852,539.6 868.4,532.6 891.9,537.3 920,544.3 938.7,545.5 982.1,539.6" fill="none" stroke="#00c8e6" stroke-width="2" stroke-linejoin="round" />
<polyline points="5.6,534.7 36.6,549.1 84.4,528.5 133.1,561 181,597.5 196.9,593.75 229.1,588.1 257.5,584.8 299.7,584.1 325.5,571.25 341.9,556.7 355.9,559.5 372.3,558.4 388.7,564.7 406.3,550.6 421.5,547.8 438,547.8 454.4,540.8 500,540.8 546.9,531.4 561,538.4 579.7,545.5 598.4,556.7 612.5,558.4 631.2,564.2 654.7,575.9 675.8,590 694.5,590 710.9,585.3 748.4,590 776.5,590 788.75,584.1 805.2,559.5 823.9,538.4 836.8,529.5 868.4,533.75 901.2,540.8 931.7,551.3 952.8,551.3 982.1,550.2" fill="none" stroke="#ff0000" stroke-width="2" stroke-linejoin="round" />
<polyline points="5.6,530 36.6,543.1 54.4,545 69.4,542.75 85.3,534.7 101.25,534.7 117.2,539.4 133.1,554.4 150,561.9 181,587.2 212.8,594.7 229.1,591 243.4,590 276.2,585.3 309,583 325.5,578.3 341.9,568.9 372.3,558.4 388.7,561.4 407.5,557.7 438,549 454.4,545.5 484.8,537.3 520,536.1 549.2,533.75 561,534.9 598.4,549 645.3,564.2 687.5,586.5 725,588.1 781.25,590 793.4,588.8 812.2,576 838,544.3 852,534.9 863.7,532.6 891.9,537.3 920,545.5 938.7,549 982.1,549.7" fill="none" stroke="#ffff00" stroke-width="2" stroke-linejoin="round" />
<polyline points="5.6,528.1 69.4,524.4 85.3,524.4 101.25,531 117.2,539.4 133.1,554.4 149.4,561.9 165,573.1 181,587.2 196.9,590 212.8,591.9 229.1,591 276.2,593.5 318.4,592.3 351.2,587.7 372.3,583 391.1,583 407.5,568.4 430.9,553.7 454.4,541.2 470.8,540.3 484.8,534.9 501.2,542 518.75,534.2 535.2,533.75 549.2,529.1 565.6,534.9 598.4,547.8 664,561.9 678.1,563 734.4,574.8 753.1,584.1 771.9,597 791.1,591.2 812.2,568.9 836.8,529.5 859,533.75 887.2,538.4 920,545.5 938.7,546.6 964.5,539.6 982.1,537.3" fill="none" stroke="#ff00ff" stroke-width="2" stroke-linejoin="round" />
</g>
<g shape-rendering="crispEdges" stroke="#fff" stroke-width="1">
<line x1="1233" y1="537.5" x2="1236" y2="537.5"/>
<line x1="1233" y1="562.5" x2="1236" y2="562.5"/>
<line x1="1233" y1="584.5" x2="1236" y2="584.5"/>
</g>
<text x="1236" y="530.5" font-size="11" fill="#fff" text-anchor="start" font-weight="normal" textLength="38" lengthAdjust="spacingAndGlyphs" >0.001733</text>
<text x="1236" y="541.5" font-size="11" fill="#fff" text-anchor="start" font-weight="normal" textLength="11" lengthAdjust="spacingAndGlyphs" >80</text>
<text x="1236" y="566.5" font-size="11" fill="#fff" text-anchor="start" font-weight="normal" textLength="11" lengthAdjust="spacingAndGlyphs" >50</text>
<text x="1236" y="588.5" font-size="11" fill="#fff" text-anchor="start" font-weight="normal" textLength="20" lengthAdjust="spacingAndGlyphs" >0.00</text>
<text x="1236" y="591.5" font-size="11" fill="#fff" text-anchor="start" font-weight="normal" textLength="11" lengthAdjust="spacingAndGlyphs" >20</text>
<text x="1236" y="601.5" font-size="11" fill="#fff" text-anchor="start" font-weight="normal" textLength="41" lengthAdjust="spacingAndGlyphs" >-0.000518</text>
<polygon points="5,608 10,614 5,614" fill="#8898b0"/>
<g shape-rendering="crispEdges" stroke="#fff" stroke-width="1">
<line x1="5.5" y1="615" x2="5.5" y2="618"/>
<line x1="69.5" y1="615" x2="69.5" y2="618"/>
<line x1="133.5" y1="615" x2="133.5" y2="618"/>
<line x1="197.5" y1="615" x2="197.5" y2="618"/>
<line x1="261.5" y1="615" x2="261.5" y2="618"/>
<line x1="325.5" y1="615" x2="325.5" y2="618"/>
<line x1="389.5" y1="615" x2="389.5" y2="618"/>
<line x1="453.5" y1="615" x2="453.5" y2="618"/>
<line x1="517.5" y1="615" x2="517.5" y2="618"/>
<line x1="581.5" y1="615" x2="581.5" y2="618"/>
<line x1="645.5" y1="615" x2="645.5" y2="618"/>
<line x1="709.5" y1="615" x2="709.5" y2="618"/>
<line x1="773.5" y1="615" x2="773.5" y2="618"/>
<line x1="837.5" y1="615" x2="837.5" y2="618"/>
<line x1="901.5" y1="615" x2="901.5" y2="618"/>
<line x1="965.5" y1="615" x2="965.5" y2="618"/>
</g>
<text x="4" y="627" font-size="10" fill="#fff" text-anchor="start" font-weight="normal" textLength="46" lengthAdjust="spacingAndGlyphs" >8 Apr 2026</text>
<text x="68" y="627" font-size="10" fill="#fff" text-anchor="start" font-weight="normal" textLength="49" lengthAdjust="spacingAndGlyphs" >8 Apr 14:00</text>
<text x="132" y="627" font-size="10" fill="#fff" text-anchor="start" font-weight="normal" textLength="49" lengthAdjust="spacingAndGlyphs" >8 Apr 18:00</text>
<text x="196" y="627" font-size="10" fill="#fff" text-anchor="start" font-weight="normal" textLength="49" lengthAdjust="spacingAndGlyphs" >8 Apr 22:00</text>
<text x="260" y="627" font-size="10" fill="#fff" text-anchor="start" font-weight="normal" textLength="49" lengthAdjust="spacingAndGlyphs" >9 Apr 02:00</text>
<text x="324" y="627" font-size="10" fill="#fff" text-anchor="start" font-weight="normal" textLength="49" lengthAdjust="spacingAndGlyphs" >9 Apr 06:00</text>
<text x="388" y="627" font-size="10" fill="#fff" text-anchor="start" font-weight="normal" textLength="49" lengthAdjust="spacingAndGlyphs" >9 Apr 10:00</text>
<text x="452" y="627" font-size="10" fill="#fff" text-anchor="start" font-weight="normal" textLength="49" lengthAdjust="spacingAndGlyphs" >9 Apr 14:00</text>
<text x="516" y="627" font-size="10" fill="#fff" text-anchor="start" font-weight="normal" textLength="49" lengthAdjust="spacingAndGlyphs" >9 Apr 18:00</text>
<text x="580" y="627" font-size="10" fill="#fff" text-anchor="start" font-weight="normal" textLength="49" lengthAdjust="spacingAndGlyphs" >9 Apr 22:00</text>
<text x="644" y="627" font-size="10" fill="#fff" text-anchor="start" font-weight="normal" textLength="53" lengthAdjust="spacingAndGlyphs" >10 Apr 02:00</text>
<text x="708" y="627" font-size="10" fill="#fff" text-anchor="start" font-weight="normal" textLength="53" lengthAdjust="spacingAndGlyphs" >10 Apr 06:00</text>
<text x="772" y="627" font-size="10" fill="#fff" text-anchor="start" font-weight="normal" textLength="53" lengthAdjust="spacingAndGlyphs" >10 Apr 10:00</text>
<text x="836" y="627" font-size="10" fill="#fff" text-anchor="start" font-weight="normal" textLength="53" lengthAdjust="spacingAndGlyphs" >10 Apr 14:00</text>
<text x="900" y="627" font-size="10" fill="#fff" text-anchor="start" font-weight="normal" textLength="53" lengthAdjust="spacingAndGlyphs" >10 Apr 18:00</text>
<text x="964" y="627" font-size="10" fill="#fff" text-anchor="start" font-weight="normal" textLength="53" lengthAdjust="spacingAndGlyphs" >10 Apr 22:00</text>
<defs><linearGradient id="gb1" x1="0" y1="0" x2="0" y2="1"><stop offset="0" stop-color="#5858ff"/><stop offset="1" stop-color="#3030e8"/></linearGradient><linearGradient id="gb2" x1="0" y1="0" x2="0" y2="1"><stop offset="0" stop-color="#3434f0"/><stop offset="1" stop-color="#0000b8"/></linearGradient><linearGradient id="gsp" x1="0" y1="0" x2="0" y2="1"><stop offset="0" stop-color="#f4f4f4"/><stop offset="1" stop-color="#d4d4d4"/></linearGradient></defs>
<rect x="6" y="90" width="197.5" height="60" fill="#000"/>
<rect x="8" y="92" width="45.5" height="22" fill="url(#gb1)"/>
<rect x="155.5" y="92" width="45.5" height="22" fill="url(#gb1)"/>
<rect x="8" y="114" width="96" height="34" fill="url(#gb2)"/>
<rect x="106" y="114" width="95" height="34" fill="url(#gb2)"/>
<rect x="53.5" y="91" width="102" height="23" fill="#000"/>
<rect x="104" y="114" width="2" height="34" fill="#000"/>
<rect x="12" y="113.5" width="38" height="1" fill="#8080ff"/><rect x="159" y="113.5" width="38" height="1" fill="#8080ff"/>
<rect x="56" y="92" width="97.5" height="20" fill="#fff" stroke="#a0a0a0" stroke-width="1"/>
<rect x="56.5" y="92.5" width="19" height="19" fill="url(#gsp)" stroke="#a0a0a0"/>
<rect x="134" y="92.5" width="19" height="19" fill="url(#gsp)" stroke="#a0a0a0"/>
<polygon points="62.5,100 68.5,100 65.5,104" fill="#000"/><polygon points="140.5,104 146.5,104 143.5,100" fill="#000"/>
<text x="129" y="106.5" font-size="13" fill="#000" text-anchor="end" font-weight="normal" textLength="23" lengthAdjust="spacingAndGlyphs" >0.20</text>
<text x="18" y="106.5" font-size="12" fill="#fff" text-anchor="start" font-weight="normal" textLength="22.2" lengthAdjust="spacingAndGlyphs" >SELL</text>
<text x="166.5" y="106.5" font-size="12" fill="#fff" text-anchor="start" font-weight="normal" textLength="21.4" lengthAdjust="spacingAndGlyphs" >BUY</text>
<text x="23" y="141.6" font-size="12" fill="#fff" text-anchor="start" font-weight="bold" textLength="22.6" lengthAdjust="spacingAndGlyphs" >1.34</text>
<text x="51.5" y="141.6" font-size="30.5" fill="#fff" text-anchor="start" font-weight="normal" textLength="29" lengthAdjust="spacingAndGlyphs" >61</text>
<text x="87" y="126.8" font-size="11" fill="#fff" text-anchor="start" font-weight="bold" textLength="6.8" lengthAdjust="spacingAndGlyphs" >4</text>
<text x="121" y="141.6" font-size="12" fill="#fff" text-anchor="start" font-weight="bold" textLength="22.6" lengthAdjust="spacingAndGlyphs" >1.34</text>
<text x="148.5" y="141.6" font-size="30.5" fill="#fff" text-anchor="start" font-weight="normal" textLength="31" lengthAdjust="spacingAndGlyphs" >64</text>
<text x="183.8" y="126.8" font-size="11" fill="#fff" text-anchor="start" font-weight="bold" textLength="6.8" lengthAdjust="spacingAndGlyphs" >4</text>
<rect x="0" y="635" width="1280" height="45" fill="#f0f0f0"/>
<rect x="0" y="635" width="1280" height="2" fill="#ffffff"/>
<rect x="0" y="637" width="1280" height="1" fill="#000000"/>
<rect x="0" y="638" width="1280" height="1" fill="#fafafa"/>
<rect x="0" y="637" width="2" height="19" fill="#a0a0a0"/>
<rect x="210.5" y="636.5" width="83" height="19" fill="#fff" stroke="#000" stroke-width="1" shape-rendering="crispEdges"/>
<rect x="211" y="635" width="82" height="4" fill="#fff"/>
<text x="17.5" y="650.5" font-size="12" fill="#606060" text-anchor="start" font-weight="normal" textLength="83.75" lengthAdjust="spacingAndGlyphs" >GBPUSD,Weekly</text>
<text x="125" y="650.5" font-size="12" fill="#606060" text-anchor="start" font-weight="normal" textLength="72.5" lengthAdjust="spacingAndGlyphs" >GBPUSD,Daily</text>
<text x="221.5" y="650.5" font-size="12" fill="#000" text-anchor="start" font-weight="normal" textLength="61" lengthAdjust="spacingAndGlyphs" >GBPUSD,H1</text>
<text x="305" y="650.5" font-size="12" fill="#606060" text-anchor="start" font-weight="normal" textLength="62" lengthAdjust="spacingAndGlyphs" >GBPUSD,H4</text>
<text x="390" y="650.5" font-size="12" fill="#606060" text-anchor="start" font-weight="normal" textLength="92" lengthAdjust="spacingAndGlyphs" >GBPUSD,Monthly</text>
<text x="505" y="650.5" font-size="12" fill="#606060" text-anchor="start" font-weight="normal" textLength="61" lengthAdjust="spacingAndGlyphs" >GBPUSD,H1</text>
<text x="590" y="650.5" font-size="12" fill="#606060" text-anchor="start" font-weight="normal" textLength="63" lengthAdjust="spacingAndGlyphs" >GOLD,Daily</text>
<text x="673.75" y="650.5" font-size="12" fill="#606060" text-anchor="start" font-weight="normal" textLength="72" lengthAdjust="spacingAndGlyphs" >EURUSD,Daily</text>
<text x="767.5" y="650.5" font-size="12" fill="#606060" text-anchor="start" font-weight="normal" textLength="67" lengthAdjust="spacingAndGlyphs" >#Litecoin,H1</text>
<text x="856.25" y="650.5" font-size="12" fill="#606060" text-anchor="start" font-weight="normal" textLength="50.5" lengthAdjust="spacingAndGlyphs" >#CL,Daily</text>
<text x="928.75" y="650.5" font-size="12" fill="#606060" text-anchor="start" font-weight="normal" textLength="72.5" lengthAdjust="spacingAndGlyphs" >GBPUSD,Daily</text>
<text x="1026" y="650.5" font-size="12" fill="#606060" text-anchor="start" font-weight="normal" textLength="92" lengthAdjust="spacingAndGlyphs" >GBPUSD,Monthly</text>
<text x="1142.5" y="650.5" font-size="12" fill="#606060" text-anchor="start" font-weight="normal" textLength="92" lengthAdjust="spacingAndGlyphs" >GBPUSD,Monthly</text>
<g shape-rendering="crispEdges" fill="#808080">
<rect x="114" y="640" width="1" height="13"/>
<rect x="378.5" y="640" width="1" height="13"/>
<rect x="494" y="640" width="1" height="13"/>
<rect x="578.5" y="640" width="1" height="13"/>
<rect x="662.5" y="640" width="1" height="13"/>
<rect x="758.25" y="640" width="1" height="13"/>
<rect x="846.25" y="640" width="1" height="13"/>
<rect x="918.75" y="640" width="1" height="13"/>
<rect x="1014" y="640" width="1" height="13"/>
<rect x="1130" y="640" width="1" height="13"/>
</g>
<polygon points="1252,643 1252,651 1247,647" fill="#a0a0a0"/><polygon points="1266,643 1266,651 1271,647" fill="#000"/>
<rect x="0" y="656" width="1280" height="1" fill="#ffffff"/>
<rect x="0" y="679" width="1280" height="1" fill="#a8a8a8"/>
<text x="2" y="673.75" font-size="12" fill="#000" text-anchor="start" font-weight="normal" textLength="176.75" lengthAdjust="spacingAndGlyphs" >Для вызова справки нажмите F1</text>
<g shape-rendering="crispEdges" fill="#a0a0a0">
<rect x="702.5" y="659" width="1" height="19"/>
<rect x="804.25" y="659" width="1" height="19"/>
<rect x="875.5" y="659" width="1" height="19"/>
<rect x="946.25" y="659" width="1" height="19"/>
<rect x="1014" y="659" width="1" height="19"/>
<rect x="1085" y="659" width="1" height="19"/>
<rect x="1150" y="659" width="1" height="19"/>
</g>
<text x="708" y="673.75" font-size="12" fill="#000" text-anchor="start" font-weight="normal" textLength="84" lengthAdjust="spacingAndGlyphs" >2026.04.10 06:00</text>
<text x="810.5" y="673.75" font-size="12" fill="#000" text-anchor="start" font-weight="normal" textLength="53" lengthAdjust="spacingAndGlyphs" >O: 1.34230</text>
<text x="881.25" y="673.75" font-size="12" fill="#000" text-anchor="start" font-weight="normal" textLength="53" lengthAdjust="spacingAndGlyphs" >H: 1.34252</text>
<text x="952.5" y="673.75" font-size="12" fill="#000" text-anchor="start" font-weight="normal" textLength="50" lengthAdjust="spacingAndGlyphs" >L: 1.34216</text>
<text x="1020.5" y="673.75" font-size="12" fill="#000" text-anchor="start" font-weight="normal" textLength="52" lengthAdjust="spacingAndGlyphs" >C: 1.34234</text>
<text x="1090.5" y="673.75" font-size="12" fill="#000" text-anchor="start" font-weight="normal" textLength="31" lengthAdjust="spacingAndGlyphs" >V: 728</text>
<g shape-rendering="crispEdges">
<rect x="1156" y="667" width="2" height="9" fill="#1a3a7a"/><rect x="1156" y="667" width="2" height="4.05" fill="#6a8a20"/>
<rect x="1159" y="666" width="2" height="10" fill="#1a3a7a"/><rect x="1159" y="666" width="2" height="4.5" fill="#6a8a20"/>
<rect x="1162" y="665" width="2" height="11" fill="#1a3a7a"/><rect x="1162" y="665" width="2" height="4.95" fill="#6a8a20"/>
<rect x="1165" y="664" width="2" height="12" fill="#1a3a7a"/><rect x="1165" y="664" width="2" height="5.4" fill="#6a8a20"/>
<rect x="1168" y="664" width="2" height="12" fill="#1a3a7a"/><rect x="1168" y="664" width="2" height="5.4" fill="#6a8a20"/>
<rect x="1171" y="664" width="2" height="12" fill="#1a3a7a"/><rect x="1171" y="664" width="2" height="5.4" fill="#6a8a20"/>
<rect x="1174" y="664" width="2" height="12" fill="#1a3a7a"/><rect x="1174" y="664" width="2" height="5.4" fill="#6a8a20"/>
<rect x="1177" y="664" width="2" height="12" fill="#1a3a7a"/><rect x="1177" y="664" width="2" height="5.4" fill="#6a8a20"/>
</g>
<text x="1182.5" y="673.75" font-size="12" fill="#000" text-anchor="start" font-weight="normal" textLength="51" lengthAdjust="spacingAndGlyphs" >2454/9 kb</text>
<path d="M1266 678 l11-11 M1270 678 l7-7 M1274 678 l3-3" stroke="#a0a0a0"/>
<rect x="0" y="680" width="1280" height="40" fill="#0a0a0a"/>
<g fill="#fff"><polygon points="16,694 23,693 23,699.5 16,699.5"/><polygon points="24,692.8 32,691.7 32,699.5 24,699.5"/><polygon points="16,700.5 23,700.5 23,707 16,706"/><polygon points="24,700.5 32,700.5 32,708.3 24,707.2"/></g>
<rect x="48" y="680" width="288" height="39" fill="#f0f0f0"/>
<circle cx="71" cy="698" r="5" fill="none" stroke="#1a1a1a" stroke-width="1.4"/><path d="M67.3 701.7 l-6.3 6.3" stroke="#1a1a1a" stroke-width="1.5"/>
<text x="88.4" y="706" font-size="15" fill="#1a1a1a" text-anchor="start" font-weight="normal" textLength="42.6" lengthAdjust="spacingAndGlyphs" >Поиск</text>
<defs><linearGradient id="sky" x1="0" y1="0" x2="0" y2="1"><stop offset="0" stop-color="#a8d8f0"/><stop offset="1" stop-color="#40b0d8"/></linearGradient></defs>
<defs><linearGradient id="wat" x1="0" y1="0" x2="0" y2="1"><stop offset="0" stop-color="#106878"/><stop offset="1" stop-color="#58d0d8"/></linearGradient><linearGradient id="sk2" x1="0" y1="0" x2="0" y2="1"><stop offset="0" stop-color="#a8e0f0"/><stop offset="1" stop-color="#f0e8c8"/></linearGradient></defs>
<ellipse cx="297" cy="689" rx="34" ry="8" fill="url(#sk2)"/>
<path d="M263 697 q4 -6 34 -6 q30 0 35 6 q-3 4 -2 8 q3 5 -4 9 q-12 5 -29 5 q-18 0 -30 -5 q-5 -4 -2 -9 q2 -4 -2 -8z" fill="url(#wat)"/>
<path d="M277 694 l12 -6 l8 -1 l12 3 l10 5 q-10 3 -20 3 q-12 0 -22 -4z" fill="#c89868"/>
<path d="M275 699 q15 -5 32 -2 q10 2 14 5 l-8 4 q-15 -3 -30 -1z" fill="#e0b888"/>
<path d="M276 703 q10 -6 25 -4 q8 2 12 8 q-3 4 -8 5 q-3 4 -8 3 q-4 -3 -6 -6 q-6 -2 -10 0 q-5 -2 -5 -6z" fill="#e8a050"/>
<circle cx="277" cy="687" r="2.5" fill="#f8d090"/>
<defs><linearGradient id="wd" x1="0" y1="0" x2="1" y2="1"><stop offset="0" stop-color="#ffffff"/><stop offset="1" stop-color="#c8d8f0"/></linearGradient></defs>
<rect x="351.5" y="688" width="21.5" height="21.5" rx="1.5" fill="url(#wd)" stroke="#2a5cb0" stroke-width="1"/>
<path d="M353 691 l2.6 11 l2.9-8 l2.9 8 l2.8-11" stroke="#1a50c0" stroke-width="2.6" fill="none" stroke-linejoin="miter"/>
<path d="M366 700 l6 2 v6 h-8z" fill="#e0e8f8" stroke="#7090c0" stroke-width=".8"/>
<rect x="343" y="718" width="40" height="2" fill="#7ab0e8"/>
<path d="M411.8,699.7 L401.40769515458675,693.7 A12,12 0 0 1 422.1923048454133,693.7 Z" fill="#db4437"/>
<path d="M411.8,699.7 L422.1923048454133,693.7 A12,12 0 0 1 411.8,711.7 Z" fill="#f4c20d"/>
<path d="M411.8,699.7 L411.8,711.7 A12,12 0 0 1 401.40769515458675,693.7 Z" fill="#0f9d58"/>
<circle cx="411.8" cy="699.7" r="5.6" fill="#fff"/><circle cx="411.8" cy="699.7" r="4.3" fill="#4a8af4"/>
<rect x="392" y="718" width="40" height="2" fill="#7ab0e8"/>
<rect x="437" y="680" width="49" height="40" fill="#333333"/>
<g fill="#f01010"><rect x="-1.638" y="-11.969999999999999" width="3.276" height="3.78" transform="translate(461,700) rotate(-140)"/><rect x="-1.638" y="-11.969999999999999" width="3.276" height="3.78" transform="translate(461,700) rotate(-105)"/><rect x="-1.638" y="-11.969999999999999" width="3.276" height="3.78" transform="translate(461,700) rotate(-70)"/><rect x="-1.638" y="-11.969999999999999" width="3.276" height="3.78" transform="translate(461,700) rotate(-35)"/><rect x="-1.638" y="-11.969999999999999" width="3.276" height="3.78" transform="translate(461,700) rotate(0)"/><rect x="-1.638" y="-11.969999999999999" width="3.276" height="3.78" transform="translate(461,700) rotate(35)"/><rect x="-1.638" y="-11.969999999999999" width="3.276" height="3.78" transform="translate(461,700) rotate(70)"/><rect x="-1.638" y="-11.969999999999999" width="3.276" height="3.78" transform="translate(461,700) rotate(105)"/><rect x="-1.638" y="-11.969999999999999" width="3.276" height="3.78" transform="translate(461,700) rotate(140)"/><path d="M456.37467961726514,706.6056420851464 A8.064,8.064 0 1 1 465.62532038273486,706.6056420851464" fill="none" stroke="#f01010" stroke-width="3.78"/><path d="M454.448,700.63 A6.552,6.552 0 0 1 467.552,700.63 Z"/><rect x="459.74" y="700" width="2.52" height="11.969999999999999"/><circle cx="461" cy="697.228" r="2.016" fill="#333333"/></g>
<rect x="437" y="717" width="49" height="3" fill="#a8c8f0"/>
<circle cx="868" cy="692" r="6" fill="#f8b820"/><ellipse cx="874" cy="703" rx="12" ry="6.5" fill="#a8c8f0"/><circle cx="878" cy="697" r="6" fill="#a8c8f0"/>
<text x="894.3" y="706" font-size="15" fill="#fff" text-anchor="start" font-weight="normal" textLength="116" lengthAdjust="spacingAndGlyphs" >6°C  Mostly cloudy</text>
<path d="M1036 703 l5-5 l5 5" stroke="#fff" fill="none" stroke-width="1.3"/>
<rect x="1059.5" y="694.5" width="13" height="9" fill="none" stroke="#fff"/><path d="M1062 707.5 h8 M1066 703 v4" stroke="#fff"/>
<rect x="1084.5" y="695.5" width="9" height="10" rx="3" fill="none" stroke="#fff"/><path d="M1094 698 l4-2 v9 l-4-2" stroke="#fff" fill="none"/>
<path d="M1107 697 h3 l4-3 v13 l-4-3 h-3z" fill="none" stroke="#fff"/><path d="M1117 697 q2 3 0 6 M1120 695 q3 5 0 10" stroke="#fff" fill="none"/>
<text x="1132" y="706" font-size="13.5" fill="#fff" text-anchor="start" font-weight="normal" textLength="21.5" lengthAdjust="spacingAndGlyphs" >РУС</text>
<text x="1193.4" y="695" font-size="13.5" fill="#fff" text-anchor="middle" font-weight="normal" textLength="30" lengthAdjust="spacingAndGlyphs" >21:13</text>
<text x="1168.3" y="713" font-size="13.5" fill="#fff" text-anchor="start" font-weight="normal" textLength="52.6" lengthAdjust="spacingAndGlyphs" >11.04.2026</text>
<path d="M1239 689 h18 v12 h-10 l-4 4 v-4 h-4z" fill="#fff"/><path d="M1242 693 h12 M1242 696 h12" stroke="#0a0a0a"/>
<circle cx="1256" cy="703" r="9" fill="#3a3a3a" stroke="#d0d0d0" stroke-width="1.2"/>
<text x="1256" y="707.5" font-size="12" fill="#fff" text-anchor="middle" font-weight="bold" textLength="15" lengthAdjust="spacingAndGlyphs" >20</text>
<g fill-opacity="0.55">
<text x="925" y="603.7" font-size="19.5" fill="#c8c8c8" text-anchor="start" font-weight="normal" textLength="184" lengthAdjust="spacingAndGlyphs" >Активация Windows</text>
<text x="925" y="624.5" font-size="14.5" fill="#c8c8c8" text-anchor="start" font-weight="normal" textLength="301" lengthAdjust="spacingAndGlyphs" >Чтобы активировать Windows, перейдите в</text>
<text x="925" y="645" font-size="14.5" fill="#c8c8c8" text-anchor="start" font-weight="normal" textLength="150" lengthAdjust="spacingAndGlyphs" >раздел "Параметры".</text>
</g>
</svg></body></html>
